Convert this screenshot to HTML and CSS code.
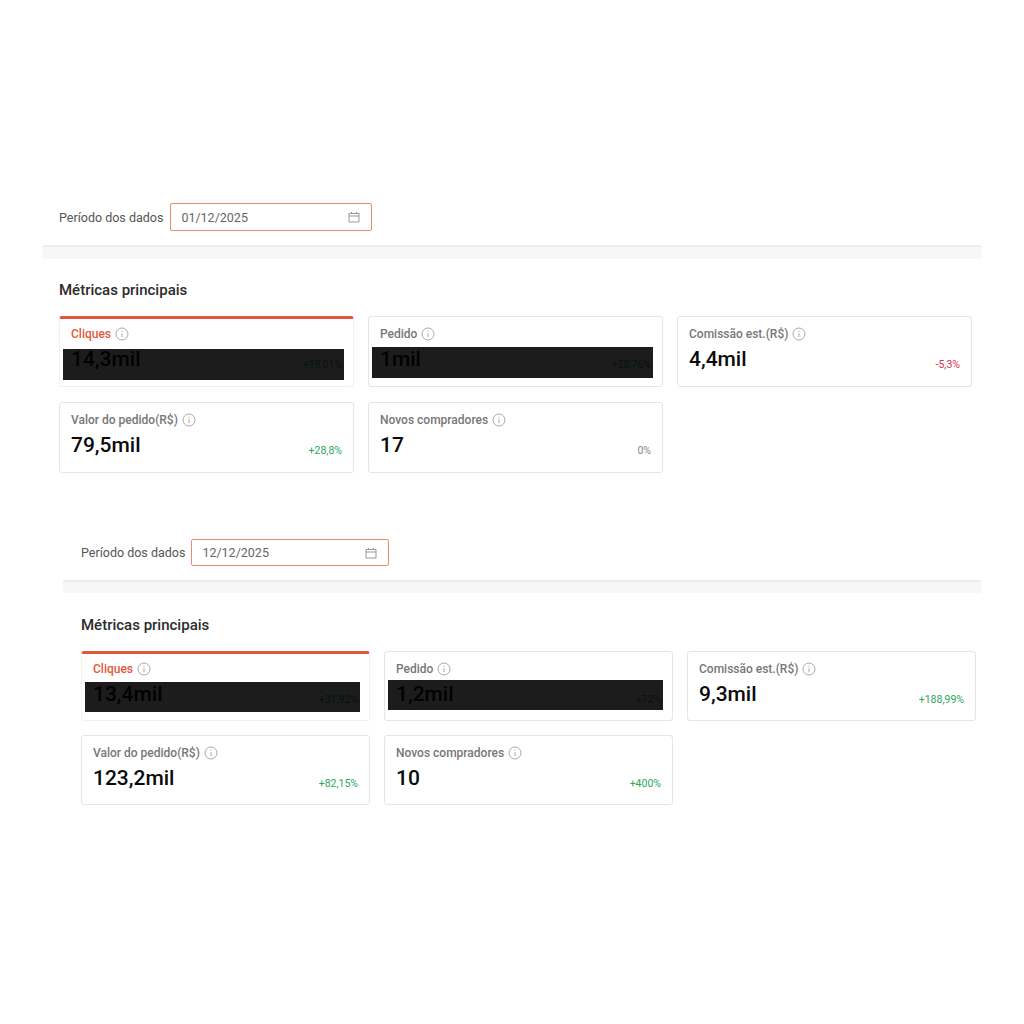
FILE: index.html
```html
<!DOCTYPE html>
<html>
  <head>
    <title>Métricas principais</title>
    <link rel="stylesheet" href="styles.css">
  </head>
  <body>
    <svg class="defs" width="0" height="0">
      <symbol id="info" viewBox="0 0 14 14">
        <circle cx="7" cy="7" r="6" fill="none" stroke="currentColor"/>
        <path d="M7 6.2v4M7 3.8v1.1" fill="none" stroke="currentColor"/>
      </symbol>
      <symbol id="calendar" viewBox="0 0 12 12">
        <path d="M1 2.5h10v8.5H1zM1 5h10M3.5 1v2M8.5 1v2" fill="none" stroke="currentColor"/>
      </symbol>
    </svg>

    <section class="panel panel-a">
      <div class="filter">
        <span class="filter-label">Período dos dados</span>
        <div class="date-input">
          <span>01/12/2025</span>
          <svg class="calendar"><use href="#calendar"/></svg>
        </div>
      </div>
      <div class="divider"></div>
      <h2 class="title">Métricas principais</h2>
      <div class="cards">
        <div class="card active">
          <div class="label">Cliques <svg class="info"><use href="#info"/></svg></div>
          <div class="row"><span class="value">14,3mil</span><span class="delta up">+19,01%</span></div>
          <div class="mask"></div>
        </div>
        <div class="card">
          <div class="label">Pedido <svg class="info"><use href="#info"/></svg></div>
          <div class="row"><span class="value">1mil</span><span class="delta up">+28,76%</span></div>
          <div class="mask"></div>
        </div>
        <div class="card">
          <div class="label">Comissão est.(R$) <svg class="info"><use href="#info"/></svg></div>
          <div class="row"><span class="value">4,4mil</span><span class="delta down">-5,3%</span></div>
        </div>
        <div class="card">
          <div class="label">Valor do pedido(R$) <svg class="info"><use href="#info"/></svg></div>
          <div class="row"><span class="value">79,5mil</span><span class="delta up">+28,8%</span></div>
        </div>
        <div class="card">
          <div class="label">Novos compradores <svg class="info"><use href="#info"/></svg></div>
          <div class="row"><span class="value">17</span><span class="delta flat">0%</span></div>
        </div>
      </div>
    </section>

    <section class="panel panel-b">
      <div class="filter">
        <span class="filter-label">Período dos dados</span>
        <div class="date-input">
          <span>12/12/2025</span>
          <svg class="calendar"><use href="#calendar"/></svg>
        </div>
      </div>
      <div class="divider"></div>
      <h2 class="title">Métricas principais</h2>
      <div class="cards">
        <div class="card active">
          <div class="label">Cliques <svg class="info"><use href="#info"/></svg></div>
          <div class="row"><span class="value">13,4mil</span><span class="delta up">+31,92%</span></div>
          <div class="mask"></div>
        </div>
        <div class="card">
          <div class="label">Pedido <svg class="info"><use href="#info"/></svg></div>
          <div class="row"><span class="value">1,2mil</span><span class="delta up">+72%</span></div>
          <div class="mask"></div>
        </div>
        <div class="card">
          <div class="label">Comissão est.(R$) <svg class="info"><use href="#info"/></svg></div>
          <div class="row"><span class="value">9,3mil</span><span class="delta up">+188,99%</span></div>
        </div>
        <div class="card">
          <div class="label">Valor do pedido(R$) <svg class="info"><use href="#info"/></svg></div>
          <div class="row"><span class="value">123,2mil</span><span class="delta up">+82,15%</span></div>
        </div>
        <div class="card">
          <div class="label">Novos compradores <svg class="info"><use href="#info"/></svg></div>
          <div class="row"><span class="value">10</span><span class="delta up">+400%</span></div>
        </div>
      </div>
    </section>
  </body>
</html>
```

FILE: styles.css
```css
* {
  margin: 0;
  box-sizing: border-box;
}
body {
  background: #fff;
  font-family: Roboto, "Liberation Sans", sans-serif;
  padding-top: 203px;
}
.defs {
  position: absolute;
}
.panel-a {
  margin-left: 43px;
  width: 938px;
}
.panel-b {
  margin-top: 66px;
  margin-left: 63px;
  width: 918px;
}
.filter {
  display: flex;
  align-items: center;
  height: 28px;
  gap: 7px;
  padding-left: 16px;
}
.panel-b .filter {
  padding-left: 18px;
  gap: 6px;
  height: 27px;
}
.filter-label {
  font-size: 12.5px;
  color: #555;
}
.date-input {
  display: flex;
  align-items: center;
  justify-content: space-between;
  width: 202px;
  height: 100%;
  padding: 0 11px 0 10px;
  border: 1px solid #ee8a72;
  border-radius: 2px;
  font-size: 12.5px;
  color: #666;
}
.panel-b .date-input {
  width: 198px;
}
.calendar {
  width: 12px;
  height: 12px;
  color: #999;
}
.divider {
  height: 14px;
  margin-top: 14px;
  background: #f7f7f7;
  border-top: 2px solid #ececec;
}
.panel-b .divider {
  height: 13px;
}
.title {
  margin: 22px 0 17px 16px;
  font-size: 15px;
  line-height: 18px;
  font-weight: 500;
  color: #2c2c2c;
}
.panel-b .title {
  margin: 23px 0 17px 18px;
}
.cards {
  display: grid;
  grid-template-columns: repeat(3, 1fr);
  gap: 15px 14px;
  width: 913px;
  margin-left: 16px;
}
.panel-b .cards {
  width: 895px;
  margin-left: 18px;
  row-gap: 14px;
}
.card {
  position: relative;
  height: 71px;
  padding: 10px 11px 0;
  border: 1px solid #e5e5e5;
  border-radius: 3px;
}
.panel-b .card {
  height: 70px;
}
.card.active {
  border: 1px solid #fbeee9;
  border-top: 3px solid #e2583a;
  padding-top: 8px;
}
.label {
  display: flex;
  align-items: center;
  gap: 4px;
  height: 14px;
  font-size: 12px;
  font-weight: 500;
  color: #777;
}
.active .label {
  color: #e2583a;
}
.info {
  width: 14px;
  height: 14px;
  color: #aaa;
}
.row {
  display: flex;
  align-items: flex-end;
  justify-content: space-between;
  margin-top: 5px;
}
.value {
  font-size: 21px;
  line-height: 26px;
  font-weight: 500;
  color: #0a0a0a;
}
.delta {
  font-size: 10.5px;
  line-height: 14px;
}
.up {
  color: #2aa85a;
}
.down {
  color: #d9304f;
}
.flat {
  color: #888;
}
.mask {
  position: absolute;
  left: 3px;
  right: 9px;
  top: 30px;
  height: 31px;
  background: rgba(0, 0, 0, .89);
}
.panel-b .mask {
  top: 28px;
  height: 30px;
}
```
